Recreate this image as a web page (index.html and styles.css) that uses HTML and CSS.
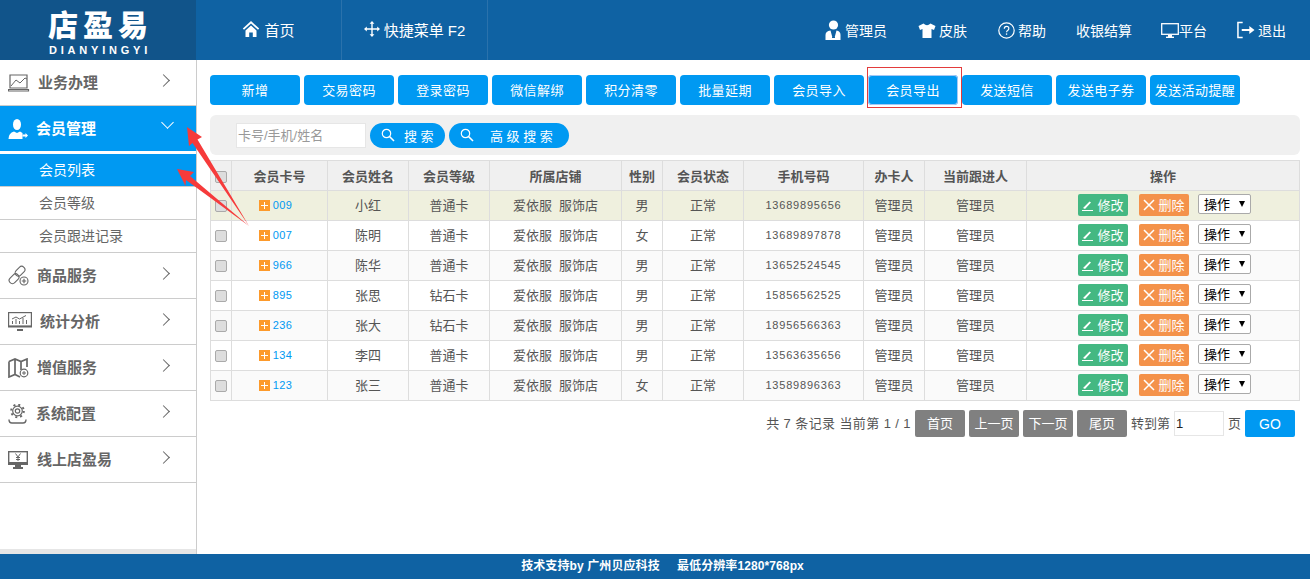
FILE: index.html
```html
<!DOCTYPE html>
<html lang="zh-CN">
  <head>
    <meta charset="UTF-8" />
    <title>店盈易 - 会员列表</title>
    <link rel="stylesheet" href="styles.css">
  </head>
  <body>
    <div class="header">
      <div class="logo">
        <div class="logo-name">店盈易</div>
        <div class="logo-sub">DIANYINGYI</div>
      </div>
      <div class="top-nav">
        <a class="top-tab">
          <svg width="18" height="18" viewBox="0 0 18 18"><path d="M9 1 0.8 8.6 2 9.8 9 3.4l7 6.4 1.2-1.2z M3.5 10.5 9 5.4l5.5 5.1V17h-3.7v-4.5H7.2V17H3.5z" fill="#fff"/></svg>
          首页
        </a>
        <a class="top-tab">
          <svg width="16" height="16" viewBox="0 0 16 16"><path d="M8 0 5.6 2.8h1.7v4.5H2.8V5.6L0 8l2.8 2.4V8.7h4.5v4.5H5.6L8 16l2.4-2.8H8.7V8.7h4.5v1.7L16 8l-2.8-2.4v1.7H8.7V2.8h1.7z" fill="#fff"/></svg>
          快捷菜单 F2
        </a>
      </div>
      <div class="top-right">
        <a class="top-link link-admin">
          <svg width="17" height="20" viewBox="0 0 17 20"><circle cx="8.5" cy="5" r="4.6" fill="#fff"/><path d="M0.500 20v-5q0-4 5-4.500l1.500 5.500h3l1.500-5.500q4 .5 4 4.500v5z" fill="#fff"/><path d="M7.500 12h2l.5 6h-3z" fill="#0f62a3"/></svg>
          管理员
        </a>
        <a class="top-link link-skin">
          <svg width="18" height="15" viewBox="0 0 18 15"><path d="M5.500 0.500 0.500 3l1.500 4 2.500-1V15h9V6l2.500 1 1.500-4-5-2.500Q9 4 5.500.5z" fill="#fff"/></svg>
          皮肤
        </a>
        <a class="top-link link-help">
          <svg width="17" height="17" viewBox="0 0 17 17"><circle cx="8.500" cy="8.500" r="7.700" fill="none" stroke="#fff" stroke-width="1.200"/><path d="M6.300 6.700q0-2.300 2.300-2.300t2.200 2.100q0 1.200-1.200 1.900-1 .6-1 1.800" fill="none" stroke="#fff" stroke-width="1.200"/><rect x="7.900" y="11.400" width="1.300" height="1.400" fill="#fff"/></svg>
          帮助
        </a>
        <a class="top-link link-cash">收银结算</a>
        <a class="top-link link-platform">
          <svg width="18" height="15" viewBox="0 0 18 15"><rect x="0.700" y="0.700" width="16.600" height="10.600" fill="none" stroke="#fff" stroke-width="1.300"/><rect x="7" y="12" width="4" height="2" fill="#fff"/><rect x="5" y="13.600" width="8" height="1.400" fill="#fff"/></svg>
          平台
        </a>
        <a class="top-link link-exit">
          <svg width="18" height="18" viewBox="0 0 19 18"><path d="M6 1H1v16h5" fill="none" stroke="#fff" stroke-width="1.600"/><path d="M5 8h8V4.800L18.500 9 13 13.200V10H5z" fill="#fff"/></svg>
          退出
        </a>
      </div>
    </div>

    <div class="body-wrap">
      <div class="sidebar">
        <a class="menu-item">
          <svg class="menu-icon" width="22" height="18" viewBox="0 0 22 18"><path d="M2 1h17v13H2z M0.500 15.500h20v1.500h-20z" fill="none" stroke="#666" stroke-width="1.200"/><path d="M3 12l5-6 4 3 5-5 2 1" fill="none" stroke="#666"/></svg>
          <span class="menu-text">业务办理</span>
          <span class="chev-right"></span>
        </a>
        <a class="menu-item active">
          <svg class="menu-icon" width="20" height="22" viewBox="0 0 20 22"><ellipse cx="9" cy="6.500" rx="4" ry="5.500" fill="#fff"/><path d="M0.500 21q0-6 5.500-7.500l3 1.500 3-1.500 2.500 1.500V21z" fill="#fff"/><path d="M14.500 16.500h3V15l2.500 2.500-2.500 2.500v-1.500h-3z" fill="#fff"/></svg>
          <span class="menu-text">会员管理</span>
          <span class="chev-down"></span>
        </a>
        <div class="sub-gap"></div>
        <a class="sub-item current">会员列表</a>
        <a class="sub-item">会员等级</a>
        <a class="sub-item">会员跟进记录</a>
        <a class="menu-item">
          <svg class="menu-icon" width="21" height="21" viewBox="0 0 21 21"><g fill="none" stroke="#666" stroke-width="1.100"><rect x="0.500" y="10.500" width="11" height="6.500" rx="3.200" transform="rotate(-45 6 13.700)"/><rect x="6.500" y="3" width="11" height="6.500" rx="3.200" transform="rotate(-45 12 6.200)"/><circle cx="16" cy="16" r="4"/></g><path d="M13.800 16h4.400M16 13.800v4.400" stroke="#666" stroke-width="1.200"/></svg>
          <span class="menu-text">商品服务</span>
          <span class="chev-right"></span>
        </a>
        <a class="menu-item">
          <svg class="menu-icon" width="24" height="19" viewBox="0 0 24 19"><rect x="0.600" y="0.600" width="22.800" height="13.800" fill="none" stroke="#666" stroke-width="1.200"/><rect x="0" y="13.500" width="24" height="2" fill="#666"/><rect x="9" y="17" width="6" height="2" fill="#666"/><path d="M4.500 12V9M8 12V7M11.500 12V9M15 12V6M18.500 12V8M4 7l4-2 3.500 2L18 3.500" fill="none" stroke="#666"/></svg>
          <span class="menu-text">统计分析</span>
          <span class="chev-right"></span>
        </a>
        <a class="menu-item">
          <svg class="menu-icon" width="21" height="20" viewBox="0 0 21 20"><path d="M1 3.500 7 1l6 2.500L19 1v8M1 3.500V19l6-2.500 5 2.500M7 1v15.500M13 3.500V12" fill="none" stroke="#666" stroke-width="1.700"/><circle cx="16" cy="15" r="3.800" fill="#fff" stroke="#666" stroke-width="1.200"/><path d="M14 15h4M16 13v4" stroke="#666"/></svg>
          <span class="menu-text">增值服务</span>
          <span class="chev-right"></span>
        </a>
        <a class="menu-item">
          <svg class="menu-icon icon-loose" width="19" height="20" viewBox="0 0 19 20"><circle cx="9.500" cy="7" r="2.200" fill="none" stroke="#666" stroke-width="1.200"/><circle cx="9.500" cy="7" r="4.800" fill="none" stroke="#666" stroke-width="1.200"/><circle cx="9.500" cy="7" r="6.300" fill="none" stroke="#666" stroke-width="2" stroke-dasharray="2 2.950"/><path d="M1 15.500q0 3.500 3 3.500h11q3 0 3-3.500" fill="none" stroke="#666" stroke-width="1.400"/></svg>
          <span class="menu-text">系统配置</span>
          <span class="chev-right"></span>
        </a>
        <a class="menu-item">
          <svg class="menu-icon icon-loose" width="20" height="18" viewBox="0 0 20 18"><rect x="0.700" y="0.700" width="18.600" height="12.600" fill="none" stroke="#666" stroke-width="1.400"/><path d="M0 11h20v3H0zM7 14h6v2H7zM5 16h10v2H5z" fill="#666"/><path d="M7.500 2.500 10 6l2.500-3.500M10 6v4M8 6.500h4M8 8.500h4" fill="none" stroke="#666"/></svg>
          <span class="menu-text">线上店盈易</span>
          <span class="chev-right"></span>
        </a>
        <div class="sidebar-strip"></div>
      </div>

      <div class="main-content">
        <div class="toolbar">
          <button class="tool-btn">新增</button>
          <button class="tool-btn">交易密码</button>
          <button class="tool-btn">登录密码</button>
          <button class="tool-btn">微信解绑</button>
          <button class="tool-btn">积分清零</button>
          <button class="tool-btn">批量延期</button>
          <button class="tool-btn">会员导入</button>
          <span class="focus-box"><button class="tool-btn focused">会员导出</button></span>
          <button class="tool-btn">发送短信</button>
          <button class="tool-btn">发送电子券</button>
          <button class="tool-btn">发送活动提醒</button>
        </div>

        <div class="search-bar">
          <input class="search-input" placeholder="卡号/手机/姓名" />
          <button class="search-btn btn-search">
            <svg width="14" height="14" viewBox="0 0 14 14"><circle cx="5.500" cy="5.500" r="4.200" fill="none" stroke="#fff" stroke-width="1.200"/><path d="M8.500 8.500 13 13" stroke="#fff" stroke-width="1.600"/></svg>
            <span>搜 索</span>
          </button>
          <button class="search-btn btn-advanced">
            <svg width="14" height="14" viewBox="0 0 14 14"><circle cx="5.500" cy="5.500" r="4.200" fill="none" stroke="#fff" stroke-width="1.200"/><path d="M8.500 8.500 13 13" stroke="#fff" stroke-width="1.600"/></svg>
            <span>高 级 搜 索</span>
          </button>
        </div>

        <table class="member-table">
          <colgroup>
            <col class="c-check" /><col class="c-card" /><col class="c-name" /><col class="c-level" /><col class="c-store" />
            <col class="c-sex" /><col class="c-state" /><col class="c-phone" /><col class="c-staff" /><col class="c-follow" /><col />
          </colgroup>
          <thead>
            <tr>
              <th><span class="check"></span></th>
              <th>会员卡号</th><th>会员姓名</th><th>会员等级</th><th>所属店铺</th><th>性别</th>
              <th>会员状态</th><th>手机号码</th><th>办卡人</th><th>当前跟进人</th><th>操作</th>
            </tr>
          </thead>
          <tbody id="rows"></tbody>
        </table>

        <div class="pager">
          <span class="pager-info">共 7 条记录 当前第 1 / 1</span>
          <button class="page-btn">首页</button>
          <button class="page-btn">上一页</button>
          <button class="page-btn">下一页</button>
          <button class="page-btn">尾页</button>
          <span class="pager-label">转到第</span>
          <input class="page-input" value="1" />
          <span class="pager-unit">页</span>
          <button class="page-go">GO</button>
        </div>
      </div>
    </div>

    <div class="footer">技术支持by 广州贝应科技 &nbsp;&nbsp;&nbsp; 最低分辨率1280*768px</div>

    <svg class="arrows" width="100" height="120" viewBox="165 115 100 120">
      <path d="M187 127 202 137 197.500 139.500 249 226 192.500 143 189 146z" fill="#f63b3b"/>
      <path d="M177 169 194 172 190 176 249 226 186 180 185.500 186z" fill="#f63b3b"/>
    </svg>

    <script src="rows.js"></script>
  </body>
</html>
```

FILE: rows.js
```js
var members = [
  ['009', '小红', '普通卡', '男', '13689895656'],
  ['007', '陈明', '普通卡', '女', '13689897878'],
  ['966', '陈华', '普通卡', '男', '13652524545'],
  ['895', '张思', '钻石卡', '男', '15856562525'],
  ['236', '张大', '钻石卡', '男', '18956566363'],
  ['134', '李四', '普通卡', '男', '13563635656'],
  ['123', '张三', '普通卡', '女', '13589896363']
];

var html = '';
members.forEach(function (m) {
  html += '<tr>' +
    '<td><span class="check"></span></td>' +
    '<td class="card-cell"><span class="plus"></span><a class="card-no">' + m[0] + '</a></td>' +
    '<td>' + m[1] + '</td>' +
    '<td>' + m[2] + '</td>' +
    '<td>爱依服&nbsp;&nbsp;服饰店</td>' +
    '<td>' + m[3] + '</td>' +
    '<td>正常</td>' +
    '<td class="phone">' + m[4] + '</td>' +
    '<td>管理员</td>' +
    '<td>管理员</td>' +
    '<td><div class="ops">' +
      '<a class="op-btn op-edit"><svg width="12" height="12" viewBox="0 0 12 12"><path d="M1 9 7.500 2.500 9 3.500 3 10zM0 11h11v1H0z" fill="#fff"/></svg>修改</a>' +
      '<a class="op-btn op-del"><svg width="12" height="12" viewBox="0 0 12 12"><path d="M1 1l10 10M11 1 1 11" stroke="#fff" stroke-width="1.500"/></svg>删除</a>' +
      '<span class="op-select">操作<i class="caret"></i></span>' +
    '</div></td>' +
    '</tr>';
});
document.getElementById('rows').innerHTML = html;
```

FILE: styles.css
```css
html, body {
  height: 100%;
  margin: 0;
  padding: 0;
}
body {
  font-family: 'Liberation Sans', 'Noto Sans CJK SC', sans-serif;
  font-size: 13px;
  color: #555;
  background-color: #fff;
  display: flex;
  flex-direction: column;
  position: relative;
  overflow: hidden;
}
.header {
  height: 60px;
  flex-shrink: 0;
  display: flex;
  background-color: #0f62a3;
  color: #fff;
}
.logo {
  width: 196px;
  background-color: #11548a;
  text-align: center;
  font-family: 'Noto Sans CJK SC', sans-serif;
}
.logo-name {
  font-size: 30px;
  font-weight: 900;
  line-height: 28px;
  padding: 9px 0 0 5px;
  letter-spacing: 5px;
}
.logo-sub {
  font-family: 'Liberation Sans', sans-serif;
  font-size: 11px;
  font-weight: bold;
  line-height: 12px;
  padding-left: 4px;
  letter-spacing: 3.800px;
  margin-top: 7px;
}
.top-nav {
  display: flex;
}
.top-tab {
  width: 146px;
  display: flex;
  align-items: center;
  justify-content: center;
  gap: 4px;
  padding-bottom: 2px;
  box-sizing: border-box;
  font-size: 15px;
  border-right: 1px solid #2a72ac;
}
.top-right {
  margin-left: auto;
  display: flex;
  align-items: center;
  padding-right: 24px;
  font-size: 14px;
}
.top-link {
  display: flex;
  align-items: center;
  gap: 3px;
  margin-left: 30px;
}
.top-link svg {
  flex-shrink: 0;
}
.link-skin, .link-help {
  margin-left: 31px;
}
.link-platform {
  gap: 0;
  margin-left: 29px;
}
.body-wrap {
  flex: 1;
  display: flex;
  min-height: 0;
}
.sidebar {
  width: 196px;
  flex-shrink: 0;
  border-right: 1px solid #ccc;
  display: flex;
  flex-direction: column;
}
.menu-item {
  height: 45px;
  box-sizing: content-box;
  flex-shrink: 0;
  display: flex;
  align-items: center;
  padding-left: 8px;
  border-bottom: 1px solid #ccc;
  font-size: 15px;
  font-weight: bold;
  color: #666;
  position: relative;
}
.menu-item.active {
  background-color: #0099f2;
  color: #fff;
  border-bottom: none;
}
.menu-icon {
  margin-right: 8px;
  flex-shrink: 0;
}
.icon-loose {
  margin-right: 9px;
}
.menu-text {
  white-space: nowrap;
  margin-bottom: 2px;
}
.chev-right {
  position: absolute;
  left: 159px;
  top: 16px;
  width: 8px;
  height: 8px;
  border-top: 1px solid #666;
  border-right: 1px solid #666;
  transform: rotate(45deg);
}
.chev-down {
  position: absolute;
  left: 163px;
  top: 12px;
  width: 8px;
  height: 8px;
  border-right: 1px solid #fff;
  border-bottom: 1px solid #fff;
  transform: rotate(45deg);
}
.sub-gap {
  height: 3px;
  flex-shrink: 0;
}
.sub-item {
  height: 32px;
  flex-shrink: 0;
  line-height: 32px;
  padding-left: 39px;
  border-bottom: 1px solid #ccc;
  color: #666;
  font-size: 14px;
}
.sub-item.current {
  background-color: #0099f2;
  color: #fff;
}
.sidebar-strip {
  margin-top: auto;
  height: 5px;
  background-color: #e6e6e6;
}
.main-content {
  flex: 1;
  min-width: 0;
  padding: 15px 10px 0 13px;
}
.toolbar {
  display: flex;
  gap: 4px;
  height: 30px;
}
.tool-btn {
  width: 90px;
  height: 30px;
  padding: 0 0 2px;
  border: none;
  border-radius: 4px;
  background-color: #0099f2;
  color: #fff;
  font-family: inherit;
  font-size: 13px;
  letter-spacing: 0.4px;
  white-space: nowrap;
}
.focus-box {
  display: block;
  width: 90px;
  height: 30px;
  position: relative;
}
.focus-box::before {
  content: "";
  position: absolute;
  left: -1px;
  right: -4px;
  top: -8px;
  bottom: -3px;
  border: 1px solid #e33b3b;
}
.tool-btn.focused {
  position: relative;
  box-shadow: inset 0 0 0 1px #a5c8f5;
}
.search-bar {
  margin-top: 10px;
  height: 40px;
  background-color: #f0f0f0;
  border-radius: 6px;
  display: flex;
  align-items: flex-start;
  gap: 4px;
  padding: 8px 0 0 26px;
  box-sizing: border-box;
}
.search-input {
  width: 130px;
  height: 25px;
  box-sizing: border-box;
  border: 1px solid #e6e6e6;
  padding: 0 1px;
  font-family: inherit;
  font-size: 13px;
  outline: none;
}
.search-input::placeholder {
  color: #999;
}
.search-btn {
  height: 25px;
  border: none;
  border-radius: 13px;
  background-color: #0099f2;
  color: #fff;
  font-family: inherit;
  font-size: 13px;
  padding: 0 0 1px 11px;
  display: flex;
  align-items: center;
}
.btn-search {
  width: 75px;
}
.btn-search span {
  margin-left: 9px;
}
.btn-advanced {
  width: 120px;
}
.btn-advanced span {
  margin-left: 16px;
}
.member-table {
  margin-top: 5px;
  width: 1090px;
  table-layout: fixed;
  border-collapse: collapse;
  font-size: 13px;
}
.c-check { width: 21px; }
.c-card { width: 96px; }
.c-name { width: 81px; }
.c-level { width: 81px; }
.c-store { width: 132px; }
.c-sex { width: 41px; }
.c-state { width: 81px; }
.c-phone { width: 120px; }
.c-staff { width: 61px; }
.c-follow { width: 102px; }
.member-table th, .member-table td {
  height: 30px;
  padding: 0;
  box-sizing: border-box;
  border: 1px solid #ddd;
  text-align: center;
  white-space: nowrap;
}
.member-table td {
  padding-bottom: 2px;
}
.member-table td.card-cell {
  padding-right: 8px;
}
.member-table th {
  background-color: #f0f0f0;
  font-weight: bold;
  color: #555;
}
.member-table tbody tr:nth-child(even) {
  background-color: #fff;
}
.member-table tbody tr:nth-child(odd) {
  background-color: #fafafa;
}
.member-table tbody tr:first-child {
  background-color: #eff0de;
}
.check {
  display: inline-block;
  width: 10px;
  height: 10px;
  border: 1px solid #aaa;
  border-radius: 2px;
  background-color: #ddd;
  vertical-align: middle;
}
.plus {
  display: inline-block;
  width: 11px;
  height: 11px;
  margin-right: 3px;
  vertical-align: -2px;
  background:
    linear-gradient(#fff, #fff) center / 7px 1px no-repeat,
    linear-gradient(#fff, #fff) center / 1px 7px no-repeat,
    #fd9a2b;
}
.card-no {
  color: #0099f2;
  font-size: 11px;
  letter-spacing: 0.3px;
}
.phone {
  font-size: 11px;
  letter-spacing: 0.8px;
}
.ops {
  display: flex;
  align-items: center;
  padding-left: 51px;
}
.op-btn {
  width: 50px;
  height: 22px;
  border-radius: 2px;
  color: #fff;
  display: flex;
  align-items: center;
  justify-content: center;
  gap: 3px;
  font-size: 13px;
}
.op-edit {
  background-color: #44b882;
}
.op-del {
  background-color: #f4924a;
  margin-left: 11px;
}
.op-select {
  box-sizing: border-box;
  width: 53px;
  height: 20px;
  margin-left: 9px;
  padding-left: 5px;
  border: 1px solid #aaa;
  border-radius: 2px;
  background-color: #fff;
  color: #000;
  display: flex;
  align-items: center;
  position: relative;
  top: -1px;
}
.caret {
  margin-left: 9px;
  border-left: 3.500px solid transparent;
  border-right: 3.500px solid transparent;
  border-top: 6px solid #000;
}
.pager {
  margin-top: 9px;
  padding-right: 5px;
  display: flex;
  justify-content: flex-end;
  align-items: center;
  height: 27px;
  font-size: 13px;
}
.pager-info {
  margin: 0 4px 2px 0;
  letter-spacing: 0.4px;
  white-space: nowrap;
}
.page-btn {
  width: 50px;
  height: 27px;
  margin-right: 4px;
  padding: 0 0 2px;
  border: none;
  border-radius: 2px;
  background-color: #808080;
  color: #fff;
  font-family: inherit;
  font-size: 13px;
}
.pager-label {
  white-space: nowrap;
  width: 43px;
  margin-bottom: 2px;
}
.page-input {
  width: 50px;
  height: 25px;
  box-sizing: border-box;
  border: 1px solid #e6e6e6;
  padding: 0 1px;
  font-family: inherit;
  font-size: 13px;
  color: #222;
  outline: none;
}
.pager-unit {
  margin: 0 4px 2px;
}
.page-go {
  width: 50px;
  height: 27px;
  border: none;
  border-radius: 2px;
  background-color: #0099f2;
  color: #fff;
  font-family: inherit;
  font-size: 14px;
}
.footer {
  height: 25px;
  flex-shrink: 0;
  line-height: 25px;
  padding-left: 15px;
  background-color: #0f62a3;
  color: #fff;
  text-align: center;
  font-size: 12px;
  letter-spacing: 0.1px;
  font-weight: bold;
}
.arrows {
  position: absolute;
  left: 165px;
  top: 115px;
  pointer-events: none;
}
```
